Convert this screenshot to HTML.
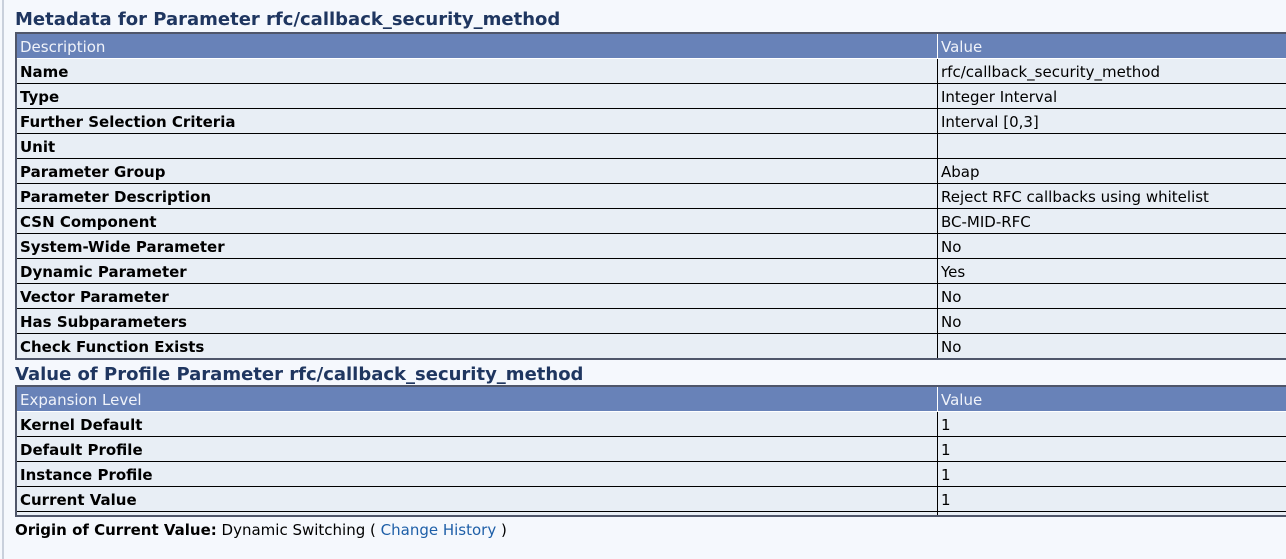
<!DOCTYPE html>
<html><head><style>
body{margin:0;width:1286px;height:559px;background:#f5f8fd;font-family:Tahoma,"DejaVu Sans","Liberation Sans",sans-serif;font-size:15px;color:#000;position:relative;overflow:hidden}
.vl{position:absolute;left:2px;top:0;width:2px;height:559px;background:#c9d0dc}
h2{position:absolute;left:15px;margin:0;font-size:18px;font-weight:bold;color:#1f3660;line-height:24px;white-space:nowrap}
.t{position:absolute;left:15px;width:1290px;border-top:2px solid #4f566a;border-left:2px solid #4f566a;border-bottom:2px solid #4f566a;background:#e8eef5}
.r{height:24px;border-bottom:1px solid #000;position:relative;line-height:26px;white-space:nowrap}
.r div{position:absolute;top:0;height:100%;padding-left:3px}
.r .a{left:0;width:917px;font-weight:bold}
.r .b{left:920px;border-left:1px solid #000;right:0}
.h{background:#6882b8;color:#f0f3fa;border-bottom:1px solid #fff}
.h .a{font-weight:normal}
.h .b{border-left:1px solid #fff}
.f{position:absolute;left:15px;top:519px;line-height:22px;white-space:nowrap}
.f a{color:#1e5fa8;text-decoration:none}
</style></head><body>
<div class="vl"></div>
<h2 style="top:8px">Metadata for Parameter rfc/callback_security_method</h2>
<div class="t" style="top:32px">
<div class="r h"><div class="a">Description</div><div class="b">Value</div></div>
<div class="r"><div class="a">Name</div><div class="b">rfc/callback_security_method</div></div>
<div class="r"><div class="a">Type</div><div class="b">Integer Interval</div></div>
<div class="r"><div class="a">Further Selection Criteria</div><div class="b">Interval [0,3]</div></div>
<div class="r"><div class="a">Unit</div><div class="b"></div></div>
<div class="r"><div class="a">Parameter Group</div><div class="b">Abap</div></div>
<div class="r"><div class="a">Parameter Description</div><div class="b">Reject RFC callbacks using whitelist</div></div>
<div class="r"><div class="a">CSN Component</div><div class="b">BC-MID-RFC</div></div>
<div class="r"><div class="a">System-Wide Parameter</div><div class="b">No</div></div>
<div class="r"><div class="a">Dynamic Parameter</div><div class="b">Yes</div></div>
<div class="r"><div class="a">Vector Parameter</div><div class="b">No</div></div>
<div class="r"><div class="a">Has Subparameters</div><div class="b">No</div></div>
<div class="r" style="border-bottom:none"><div class="a">Check Function Exists</div><div class="b">No</div></div>
</div>
<h2 style="top:363px">Value of Profile Parameter rfc/callback_security_method</h2>
<div class="t" style="top:385px">
<div class="r h"><div class="a">Expansion Level</div><div class="b">Value</div></div>
<div class="r"><div class="a">Kernel Default</div><div class="b">1</div></div>
<div class="r"><div class="a">Default Profile</div><div class="b">1</div></div>
<div class="r"><div class="a">Instance Profile</div><div class="b">1</div></div>
<div class="r"><div class="a">Current Value</div><div class="b">1</div></div>
<div class="r" style="height:3px;border-bottom:none"><div class="a"></div><div class="b"></div></div>
</div>
<div class="f"><b>Origin of Current Value:</b> Dynamic Switching ( <a>Change History</a> )</div>
</body></html>
